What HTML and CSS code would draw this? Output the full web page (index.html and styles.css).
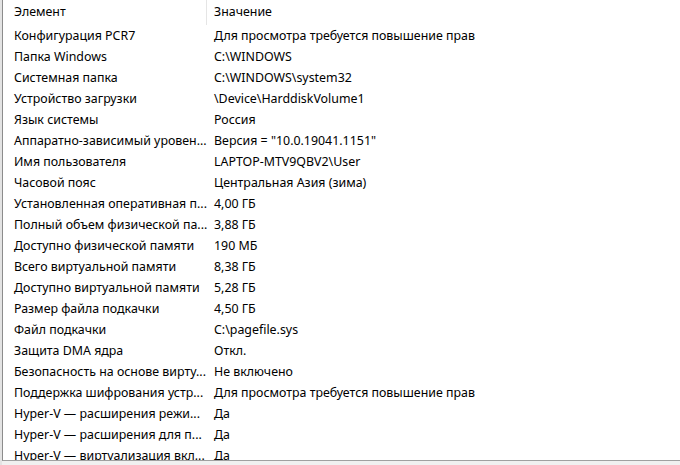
FILE: index.html
```html
<!DOCTYPE html>
<html lang="ru">
<head>
<meta charset="utf-8">
<link rel="stylesheet" href="styles.css">
</head>
<body>
<div class="frame">
  <div class="list">
    <div class="head">
      <div class="hcell first">Элемент</div>
      <div class="hcell second">Значение</div>
    </div>
    <div class="row"><div class="c1">Конфигурация PCR7</div><div class="c2">Для просмотра требуется повышение прав</div></div>
    <div class="row"><div class="c1">Папка Windows</div><div class="c2">C:\WINDOWS</div></div>
    <div class="row"><div class="c1">Системная папка</div><div class="c2">C:\WINDOWS\system32</div></div>
    <div class="row"><div class="c1">Устройство загрузки</div><div class="c2">\Device\HarddiskVolume1</div></div>
    <div class="row"><div class="c1">Язык системы</div><div class="c2">Россия</div></div>
    <div class="row"><div class="c1">Аппаратно-зависимый уровен...</div><div class="c2">Версия = "10.0.19041.1151"</div></div>
    <div class="row"><div class="c1">Имя пользователя</div><div class="c2">LAPTOP-MTV9QBV2\User</div></div>
    <div class="row"><div class="c1">Часовой пояс</div><div class="c2">Центральная Азия (зима)</div></div>
    <div class="row"><div class="c1">Установленная оперативная п...</div><div class="c2">4,00 ГБ</div></div>
    <div class="row"><div class="c1">Полный объем физической па...</div><div class="c2">3,88 ГБ</div></div>
    <div class="row"><div class="c1">Доступно физической памяти</div><div class="c2">190 МБ</div></div>
    <div class="row"><div class="c1">Всего виртуальной памяти</div><div class="c2">8,38 ГБ</div></div>
    <div class="row"><div class="c1">Доступно виртуальной памяти</div><div class="c2">5,28 ГБ</div></div>
    <div class="row"><div class="c1">Размер файла подкачки</div><div class="c2">4,50 ГБ</div></div>
    <div class="row"><div class="c1">Файл подкачки</div><div class="c2">C:\pagefile.sys</div></div>
    <div class="row"><div class="c1">Защита DMA ядра</div><div class="c2">Откл.</div></div>
    <div class="row"><div class="c1">Безопасность на основе вирту...</div><div class="c2">Не включено</div></div>
    <div class="row"><div class="c1">Поддержка шифрования устр...</div><div class="c2">Для просмотра требуется повышение прав</div></div>
    <div class="row"><div class="c1">Hyper-V — расширения режи...</div><div class="c2">Да</div></div>
    <div class="row"><div class="c1">Hyper-V — расширения для п...</div><div class="c2">Да</div></div>
    <div class="row"><div class="c1">Hyper-V — виртуализация вкл...</div><div class="c2">Да</div></div>
  </div>
  <div class="status"></div>
</div>
</body>
</html>
```
FILE: styles.css
```css
html, body {
  margin: 0;
  padding: 0;
  background: #ffffff;
}
body {
  width: 680px;
  height: 465px;
  overflow: hidden;
  font-family: "Noto Sans", "Open Sans", sans-serif;
  font-size: 12.4px;
  color: #000000;
}
.frame {
  display: flex;
  flex-direction: column;
  height: 465px;
  padding-left: 2px;
  background: #e3e3e3;
  box-sizing: border-box;
}
.list {
  height: 461px;
  overflow: hidden;
  background: #ffffff;
  border-left: 1px solid #8c8c8c;
  border-bottom: 1px solid #a0a0a0;
  box-sizing: border-box;
}
.head {
  display: grid;
  grid-template-columns: 204px 1fr;
  height: 25px;
}
.hcell {
  padding-left: 11px;
  height: 25px;
  line-height: 24px;
}
.hcell.first {
  border-right: 1px solid #e5e5e5;
}
.hcell.second {
  padding-left: 7px;
}
.row {
  display: grid;
  grid-template-columns: 204px 1fr;
  height: 21px;
  line-height: 21px;
  white-space: nowrap;
}
.c1 {
  padding-left: 11px;
  overflow: hidden;
}
.c2 {
  padding-left: 7px;
  overflow: hidden;
}
.status {
  flex: 1;
  background: #f0f0f0;
}
```
